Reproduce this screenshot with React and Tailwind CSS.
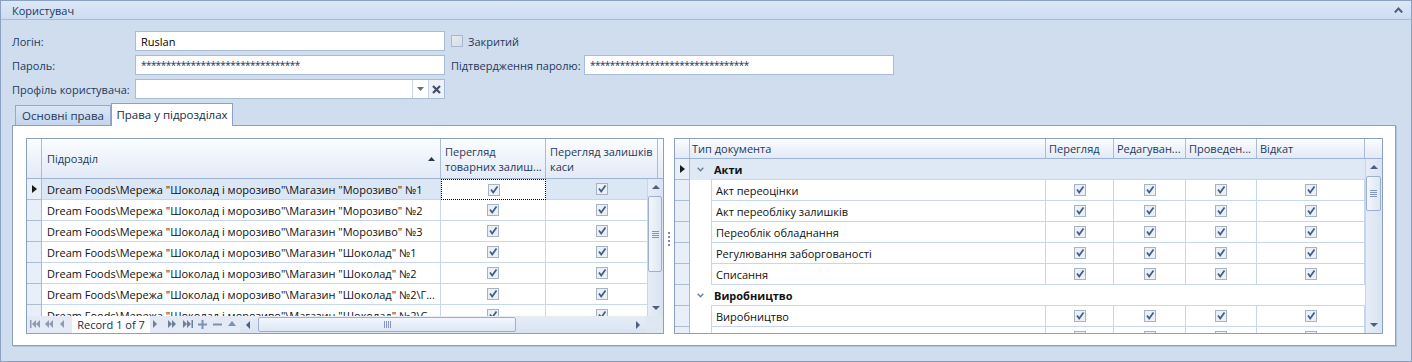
import React from "react";

const leftRows = [
  'Dream Foods\\Мережа "Шоколад і морозиво"\\Магазин "Морозиво" №1',
  'Dream Foods\\Мережа "Шоколад і морозиво"\\Магазин "Морозиво" №2',
  'Dream Foods\\Мережа "Шоколад і морозиво"\\Магазин "Морозиво" №3',
  'Dream Foods\\Мережа "Шоколад і морозиво"\\Магазин "Шоколад" №1',
  'Dream Foods\\Мережа "Шоколад і морозиво"\\Магазин "Шоколад" №2',
  'Dream Foods\\Мережа "Шоколад і морозиво"\\Магазин "Шоколад" №2\\Г...',
  'Dream Foods\\Мережа "Шоколад і морозиво"\\Магазин "Шоколад" №2\\С...',
];

const rightRows = [
  { group: true, name: "Акти", selected: true },
  { name: "Акт переоцінки" },
  { name: "Акт переобліку залишків" },
  { name: "Переоблік обладнання" },
  { name: "Регулювання заборгованості" },
  { name: "Списання" },
  { group: true, name: "Виробництво" },
  { name: "Виробництво" },
  { name: "" },
];

// checkbox in the grid cells
const Check = () => (
  <svg width="12" height="12" viewBox="0 0 12 12">
    <rect x="0.5" y="0.5" width="11" height="11" fill="#eceff3" stroke="#a6b3c6" />
    <path d="M3 5.5 L5.2 8.5 L9.5 2.5" fill="none" stroke="#3e5d8c" strokeWidth="1.7" />
  </svg>
);

const Indicator = () => (
  <svg width="5" height="8" viewBox="0 0 5 8">
    <path d="M0 0 L5 4 L0 8 Z" fill="#1a1a1a" />
  </svg>
);

const Tri = ({ dir = "up", color = "#4d5f7e" }) => {
  const d = {
    up: "M0 4 L4 0 L8 4 Z",
    down: "M0 0 L8 0 L4 4 Z",
  }[dir];
  return (
    <svg width="8" height="4" viewBox="0 0 8 4">
      <path d={d} fill={color} />
    </svg>
  );
};

const NavIcon = ({ kind, color }) => {
  const paths = {
    first: "M0 0 H1.5 V8 H0 Z M6 0 V8 L2 4 Z M10 0 V8 L6 4 Z",
    prevPage: "M4 0 V8 L0 4 Z M8 0 V8 L4 4 Z",
    prev: "M4 0 V8 L0 4 Z",
    next: "M0 0 V8 L4 4 Z",
    nextPage: "M0 0 V8 L4 4 Z M4 0 V8 L8 4 Z",
    last: "M0 0 V8 L4 4 Z M4 0 V8 L8 4 Z M8.5 0 H10 V8 H8.5 Z",
    plus: "M3.5 0 H5.5 V3.5 H9 V5.5 H5.5 V9 H3.5 V5.5 H0 V3.5 H3.5 Z",
    minus: "M0 3.5 H9 V5.5 H0 Z",
    up: "M0 6 L4 1 L8 6 Z",
  };
  return (
    <svg width="10" height="9" viewBox="0 0 10 9">
      <path d={paths[kind]} fill={color} />
    </svg>
  );
};

const Grip = () => (
  <svg width="7" height="7" viewBox="0 0 7 7">
    <path d="M0 0.5 H7 M0 2.5 H7 M0 4.5 H7 M0 6.5 H7" stroke="#8297b9" strokeWidth="1" />
  </svg>
);

const VScroll = ({ thumbTop, thumbH, className }) => (
  <div className={`flex flex-col bg-linear-to-r from-[#e6edf7] to-[#d9e3f1] ${className}`}>
    <div className="h-[16px] flex items-center justify-center">
      <Tri dir="up" />
    </div>
    <div className="flex-1 relative">
      <div
        className="absolute left-[0px] right-[1px] rounded-[2px] border border-[#9db0cf] bg-linear-to-r from-[#f3f7fc] to-[#dde6f3] flex items-center justify-center"
        style={{ top: thumbTop, height: thumbH }}
      >
        <Grip />
      </div>
    </div>
    <div className="h-[16px] flex items-center justify-center">
      <Tri dir="down" />
    </div>
  </div>
);

const Field = ({ value, className = "" }) => (
  <div
    className={`h-[20px] w-[310px] border border-[#a8bcd8] bg-white pl-[5px] flex items-center text-[#000] ${className}`}
  >
    {value}
  </div>
);

export default function App() {
  return (
    <div className="w-[1412px] h-[362px] bg-[#d0ddef] border border-[#8ca1c2] flex flex-col overflow-hidden font-['Open_Sans',sans-serif] text-[11px] text-[#1e395b] leading-none">
      {/* header bar */}
      <div className="h-[19px] shrink-0 border-b border-[#a9bcd7] bg-linear-to-b from-[#dce8f7] to-[#ccdcf0] flex items-center justify-between pl-[11px] pr-[8px]">
        <span>Користувач</span>
        <svg width="9" height="6" viewBox="0 0 9 6">
          <path d="M0.8 5.5 L4.5 1.5 L8.2 5.5" fill="none" stroke="#4e5f7d" strokeWidth="2" />
        </svg>
      </div>

      <div className="pl-[11px] pt-[11px] flex flex-col">
        {/* login */}
        <div className="flex items-center h-[20px]">
          <div className="w-[123px]">Логін:</div>
          <Field value="Ruslan" />
          <div className="ml-[6px] w-[12px] h-[12px] border border-[#a9b7cb] bg-linear-to-br from-[#e9ebef] to-[#d8dce3]" />
          <div className="ml-[5px]">Закритий</div>
        </div>
        {/* password */}
        <div className="flex items-center h-[20px] mt-[4px]">
          <div className="w-[123px]">Пароль:</div>
          <Field value="********************************" className="text-[10px] tracking-[-0.55px] text-[#1e2f55]" />
          <div className="ml-[6px] w-[133px]">Підтвердження паролю:</div>
          <Field value="********************************" className="text-[10px] tracking-[-0.55px] text-[#1e2f55]" />
        </div>
        {/* profile */}
        <div className="flex items-center h-[20px] mt-[4px]">
          <div className="w-[123px]">Профіль користувача:</div>
          <div className="h-[20px] w-[310px] border border-[#a8bcd8] bg-white flex">
            <div className="flex-1" />
            <div className="w-[16px] border-l border-[#c9d5e6] flex items-center justify-center">
              <svg width="7" height="4" viewBox="0 0 7 4">
                <path d="M0 0 H7 L3.5 4 Z" fill="#5f6f8a" />
              </svg>
            </div>
            <div className="w-[16px] border-l border-[#c9d5e6] bg-[#eef2f8] flex items-center justify-center">
              <svg width="9" height="9" viewBox="0 0 9 9">
                <path d="M1 1 L8 8 M8 1 L1 8" stroke="#3f4f6a" strokeWidth="2.2" />
              </svg>
            </div>
          </div>
        </div>

        {/* tabs */}
        <div className="flex items-end h-[22px] mt-[4px] pl-[3px] relative z-10">
          <div className="h-[20px] w-[96px] border border-[#95aacb] border-b-0 bg-linear-to-b from-[#dbe6f5] to-[#c3d5ed] flex items-center justify-center text-[11.5px]">
            Основні права
          </div>
          <div className="h-[23px] -mb-[1px] w-[122px] border border-[#8ca1c2] border-b-0 bg-white flex items-center justify-center text-[11.5px] text-[#1a2a44] whitespace-nowrap">
            Права у підрозділах
          </div>
        </div>

        {/* tab page */}
        <div className="w-[1384px] h-[221px] bg-white border border-[#8ca1c2] shadow-[1px_1px_0_#b3c3da] pl-[13px] pt-[12px] flex">
          {/* left grid */}
          <div className="w-[638px] h-[196px] border border-[#8ca1c2] flex flex-col">
            <div className="h-[40px] flex border-b border-[#9fb3d2] bg-linear-to-b from-[#fbfdff] to-[#e2eaf6]">
              <div className="w-[15px] border-r border-[#a9bcd8]" />
              <div className="w-[399px] border-r border-[#a9bcd8] flex items-center justify-between pl-[5px] pr-[5px]">
                <span>Підрозділ</span>
                <svg width="7" height="4" viewBox="0 0 7 4">
                  <path d="M0 4 L3.5 0 L7 4 Z" fill="#26384f" />
                </svg>
              </div>
              <div className="w-[105px] border-r border-[#a9bcd8] flex flex-col justify-center pl-[4px] leading-[15px]">
                <span>Перегляд</span>
                <span>товарних залиш...</span>
              </div>
              <div className="w-[112px] border-r border-[#a9bcd8] flex flex-col justify-center pl-[4px] leading-[15px]">
                <span>Перегляд залишків</span>
                <span>каси</span>
              </div>
              <div className="flex-1" />
            </div>
            <div className="h-[137px] flex">
              <div className="w-[620px] overflow-hidden">
                {leftRows.map((r, i) => (
                  <div key={i} className="h-[21px] flex text-[#111]">
                    <div className="w-[15px] shrink-0 bg-[#e8eff9] border-r border-b border-[#a9bcd8] flex items-center justify-center">
                      {i === 0 && <Indicator />}
                    </div>
                    <div className={`w-[399px] shrink-0 border-r border-b border-[#c6d6ee] flex items-center pl-[5px] whitespace-nowrap overflow-hidden ${i === 0 ? "bg-[#dce7f6]" : ""}`}>
                      {r}
                    </div>
                    <div className={`w-[105px] shrink-0 flex items-center justify-center ${i === 0 ? "border border-dotted border-[#000]" : "border-r border-b border-[#c6d6ee]"}`}>
                      <Check />
                    </div>
                    <div className={`w-[112px] shrink-0 border-r border-b border-[#c6d6ee] flex items-center justify-center ${i === 0 ? "bg-[#dce7f6]" : ""}`}>
                      <Check />
                    </div>
                  </div>
                ))}
              </div>
              <VScroll className="w-[16px] border-l border-[#c9d6e8]" thumbTop={1} thumbH={76} />
            </div>
            {/* navigator */}
            <div className="h-[17px] flex items-center bg-[#e3eaf5]">
              <div className="w-[15px] flex justify-center"><NavIcon kind="first" color="#8e9ab0" /></div>
              <div className="w-[15px] flex justify-center"><NavIcon kind="prevPage" color="#8e9ab0" /></div>
              <div className="w-[15px] flex justify-center"><NavIcon kind="prev" color="#8e9ab0" /></div>
              <div className="w-[78px] h-[17px] bg-white flex items-center justify-center text-[11px] text-[#1a2a44] whitespace-nowrap">
                Record 1 of 7
              </div>
              <div className="w-[15px] flex justify-center"><NavIcon kind="next" color="#6f7f99" /></div>
              <div className="w-[15px] flex justify-center"><NavIcon kind="nextPage" color="#6f7f99" /></div>
              <div className="w-[15px] flex justify-center"><NavIcon kind="last" color="#6f7f99" /></div>
              <div className="w-[15px] flex justify-center"><NavIcon kind="plus" color="#7c90b4" /></div>
              <div className="w-[15px] flex justify-center"><NavIcon kind="minus" color="#7c90b4" /></div>
              <div className="w-[15px] flex justify-center"><NavIcon kind="up" color="#7c90b4" /></div>
              {/* horizontal scrollbar */}
              <div className="w-[406px] h-[17px] flex items-center bg-linear-to-b from-[#e6edf7] to-[#d9e3f1]">
                <div className="w-[16px] flex justify-center">
                  <svg width="4" height="8" viewBox="0 0 4 8"><path d="M4 0 V8 L0 4 Z" fill="#4d5f7e" /></svg>
                </div>
                <div className="ml-[2px] w-[258px] h-[15px] rounded-[2px] border border-[#9db0cf] bg-linear-to-b from-[#f3f7fc] to-[#dde6f3] flex items-center justify-center">
                  <svg width="7" height="7" viewBox="0 0 7 7">
                    <path d="M0.5 0 V7 M2.5 0 V7 M4.5 0 V7 M6.5 0 V7" stroke="#8297b9" strokeWidth="1" />
                  </svg>
                </div>
                <div className="flex-1" />
                <div className="w-[16px] flex justify-center">
                  <svg width="4" height="8" viewBox="0 0 4 8"><path d="M0 0 V8 L4 4 Z" fill="#4d5f7e" /></svg>
                </div>
              </div>
              <div className="flex-1 h-[17px] bg-[#dfe7f3]" />
            </div>
          </div>

          {/* splitter */}
          <div className="w-[10px] flex items-center justify-center">
            <div className="flex flex-col gap-[2px] -mt-[6px]">
              <div className="w-[2px] h-[2px] bg-[#7489ad]" />
              <div className="w-[2px] h-[2px] bg-[#7489ad]" />
              <div className="w-[2px] h-[2px] bg-[#7489ad]" />
              <div className="w-[2px] h-[2px] bg-[#7489ad]" />
            </div>
          </div>

          {/* right grid */}
          <div className="w-[709px] h-[196px] border border-[#8ca1c2] flex flex-col">
            <div className="h-[20px] flex border-b border-[#9fb3d2] bg-linear-to-b from-[#fbfdff] to-[#e2eaf6]">
              <div className="w-[15px] border-r border-[#a9bcd8]" />
              <div className="w-[356px] border-r border-[#a9bcd8] flex items-center pl-[2px]">Тип документа</div>
              <div className="w-[68px] border-r border-[#a9bcd8] flex items-center pl-[3px]">Перегляд</div>
              <div className="w-[72px] border-r border-[#a9bcd8] flex items-center pl-[3px]">Редагуван...</div>
              <div className="w-[71px] border-r border-[#a9bcd8] flex items-center pl-[3px]">Проведен...</div>
              <div className="w-[108px] border-r border-[#a9bcd8] flex items-center pl-[3px]">Відкат</div>
              <div className="flex-1" />
            </div>
            <div className="h-[174px] flex">
              <div className="w-[690px] overflow-hidden">
                {rightRows.map((r, i) => (
                  <div key={i} className="h-[21px] flex text-[#111]">
                    <div className="w-[15px] shrink-0 bg-[#e8eff9] border-r border-b border-[#a9bcd8] flex items-center justify-center">
                      {r.selected && <Indicator />}
                    </div>
                    {r.group ? (
                      <div className={`w-[675px] shrink-0 flex ${r.selected ? "bg-[#dfe8f5]" : ""}`}>
                        <div className="w-[21px] shrink-0 flex items-center justify-center">
                          <svg width="7" height="5" viewBox="0 0 7 5">
                            <path d="M0.7 0.8 L3.5 3.8 L6.3 0.8" fill="none" stroke="#6a7c98" strokeWidth="1.4" />
                          </svg>
                        </div>
                        <div className="flex-1 border-b border-[#c6d6ee] flex items-center pl-[3px] font-bold text-[#111]">
                          {r.name}
                        </div>
                      </div>
                    ) : (
                      <>
                        <div className="w-[21px] shrink-0" />
                        <div className="w-[335px] shrink-0 border-l border-r border-b border-[#c6d6ee] flex items-center pl-[4px] whitespace-nowrap">
                          {r.name}
                        </div>
                        <div className="w-[68px] shrink-0 border-r border-b border-[#c6d6ee] flex items-center justify-center"><Check /></div>
                        <div className="w-[72px] shrink-0 border-r border-b border-[#c6d6ee] flex items-center justify-center"><Check /></div>
                        <div className="w-[71px] shrink-0 border-r border-b border-[#c6d6ee] flex items-center justify-center"><Check /></div>
                        <div className="w-[108px] shrink-0 border-r border-b border-[#c6d6ee] flex items-center justify-center"><Check /></div>
                      </>
                    )}
                  </div>
                ))}
              </div>
              <VScroll className="w-[17px] border-l border-[#c9d6e8]" thumbTop={1} thumbH={35} />
            </div>
          </div>
        </div>
      </div>
    </div>
  );
}
